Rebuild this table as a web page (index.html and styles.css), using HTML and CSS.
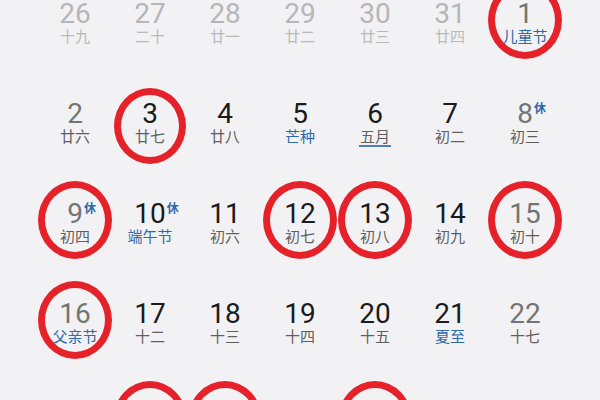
FILE: index.html
```html
<!DOCTYPE html>
<html lang="zh">
<head>
<meta charset="utf-8">
<link rel="stylesheet" href="styles.css">
</head>
<body>
<div class="month">
  <div class="cell prev"><span class="num">26</span><span class="lunar">十九</span></div>
  <div class="cell prev"><span class="num">27</span><span class="lunar">二十</span></div>
  <div class="cell prev"><span class="num">28</span><span class="lunar">廿一</span></div>
  <div class="cell prev"><span class="num">29</span><span class="lunar">廿二</span></div>
  <div class="cell prev"><span class="num">30</span><span class="lunar">廿三</span></div>
  <div class="cell prev"><span class="num">31</span><span class="lunar">廿四</span></div>
  <div class="cell wkend"><span class="num">1</span><span class="lunar fest">儿童节</span><span class="ring"></span></div>

  <div class="cell wkend"><span class="num">2</span><span class="lunar">廿六</span></div>
  <div class="cell"><span class="num">3</span><span class="lunar">廿七</span><span class="ring low"></span></div>
  <div class="cell"><span class="num">4</span><span class="lunar">廿八</span></div>
  <div class="cell"><span class="num">5</span><span class="lunar fest">芒种</span></div>
  <div class="cell"><span class="num">6</span><span class="lunar today">五月</span></div>
  <div class="cell"><span class="num">7</span><span class="lunar">初二</span></div>
  <div class="cell wkend"><span class="num">8<span class="rest">休</span></span><span class="lunar">初三</span></div>

  <div class="cell wkend"><span class="num">9<span class="rest">休</span></span><span class="lunar">初四</span><span class="ring"></span></div>
  <div class="cell"><span class="num">10<span class="rest">休</span></span><span class="lunar fest">端午节</span></div>
  <div class="cell"><span class="num">11</span><span class="lunar">初六</span></div>
  <div class="cell"><span class="num">12</span><span class="lunar">初七</span><span class="ring"></span></div>
  <div class="cell"><span class="num">13</span><span class="lunar">初八</span><span class="ring"></span></div>
  <div class="cell"><span class="num">14</span><span class="lunar">初九</span></div>
  <div class="cell wkend"><span class="num">15</span><span class="lunar">初十</span><span class="ring"></span></div>

  <div class="cell wkend"><span class="num">16</span><span class="lunar fest">父亲节</span><span class="ring"></span></div>
  <div class="cell"><span class="num">17</span><span class="lunar">十二</span></div>
  <div class="cell"><span class="num">18</span><span class="lunar">十三</span></div>
  <div class="cell"><span class="num">19</span><span class="lunar">十四</span></div>
  <div class="cell"><span class="num">20</span><span class="lunar">十五</span></div>
  <div class="cell"><span class="num">21</span><span class="lunar fest">夏至</span></div>
  <div class="cell wkend"><span class="num">22</span><span class="lunar">十七</span></div>

  <div class="cell"></div>
  <div class="cell"><span class="ring"></span></div>
  <div class="cell"><span class="ring"></span></div>
  <div class="cell"></div>
  <div class="cell"><span class="ring"></span></div>
  <div class="cell"></div>
  <div class="cell"></div>
</div>
</body>
</html>
```
FILE: styles.css
```css
html, body {
  margin: 0;
  padding: 0;
  background: #f2f2f4;
  overflow: hidden;
  height: 400px;
}
.month {
  display: grid;
  grid-template-columns: repeat(7, 75px);
  grid-auto-rows: 100px;
  padding-left: 37.5px;
  height: 400px;
  overflow: hidden;
}
.cell {
  position: relative;
  display: flex;
  flex-direction: column;
  align-items: center;
}
.num {
  position: relative;
  font-family: Roboto, "Noto Sans", sans-serif;
  font-size: 28px;
  line-height: 28px;
  color: #1b1b1b;
}
.wkend .num { color: #747474; }
.prev .num { color: #b6b6b8; }
.lunar {
  font-family: "Noto Sans CJK SC", "Noto Sans", sans-serif;
  font-size: 15px;
  line-height: 15px;
  color: #5f5f5f;
}
.prev .lunar { color: #b9b9bb; }
.lunar.fest { color: #2f67aa; }
.lunar.today {
  border-bottom: 2px solid #4f7bb6;
  padding: 0 1px 2px;
}
.rest {
  position: absolute;
  left: calc(100% + 1px);
  top: 2px;
  font-family: "Noto Sans CJK SC", sans-serif;
  font-size: 12px;
  line-height: 12px;
  font-weight: 700;
  color: #2f67aa;
}
.ring {
  position: absolute;
  left: 50%;
  top: 20px;
  width: 74px;
  height: 78px;
  box-sizing: border-box;
  border: 7px solid #e5222a;
  border-radius: 50%;
  transform: translate(-50%, -50%);
}
.ring.low { top: 26px; width: 72px; height: 76px; }
```
